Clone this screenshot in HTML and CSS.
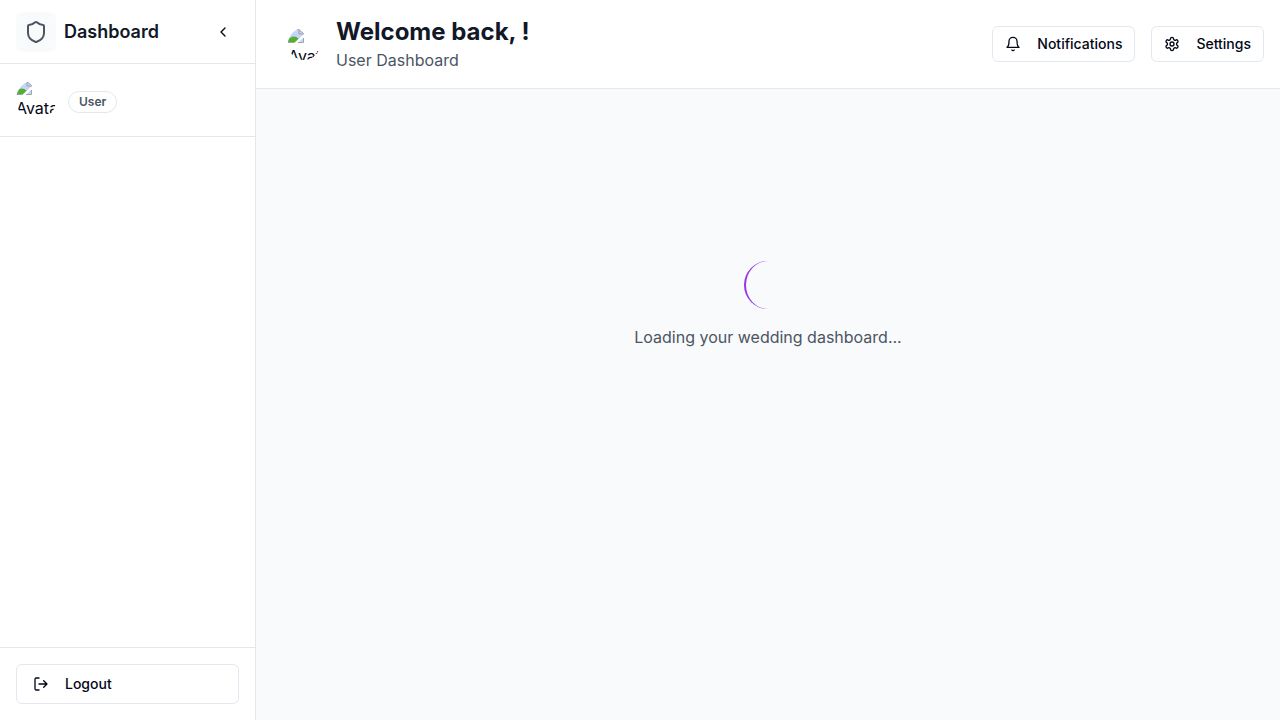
FILE: index.html
```html
<!DOCTYPE html>
<html lang="en">
<head>
  <meta charset="utf-8">
  <meta name="viewport" content="width=device-width, initial-scale=1">
  <title>Dashboard</title>
  <link rel="stylesheet" href="styles.css">
</head>
<body>
  <div class="app">
    <aside class="sidebar">
      <div class="sidebar-header">
        <div class="brand">
          <span class="brand-icon">
            <svg class="icon icon-lg" viewBox="0 0 24 24" aria-hidden="true"><path d="M20 13c0 5-3.500 7.500-7.660 8.950a1 1 0 0 1-.67-.01C7.500 20.500 4 18 4 13V6a1 1 0 0 1 1-1c2 0 4.500-1.200 6.240-2.720a1.170 1.170 0 0 1 1.520 0C14.510 3.810 17 5 19 5a1 1 0 0 1 1 1z"/></svg>
          </span>
          <span class="brand-name">Dashboard</span>
        </div>
        <button class="collapse" type="button" aria-label="Collapse sidebar">
          <svg class="icon" viewBox="0 0 24 24" aria-hidden="true"><path d="m15 18-6-6 6-6"/></svg>
        </button>
      </div>
      <div class="profile">
        <div class="avatar">
          <svg class="missing" viewBox="0 0 16 16" aria-hidden="true">
            <path fill="#c3d5f8" d="M0 1h11l4 4v10H0z"/>
            <path fill="#55ad36" d="M0 14v-2c3-4 7-5 11-1l-4 4H0z"/>
            <path fill="#fff" d="M16 6v3l-7 7H5z"/>
            <path fill="#fff" d="M11 1h5v4h-1z"/>
            <path fill="none" stroke="#a3a3a3" d="M0 14.500h6M10 14.500h5.500V10M6 1.500h5l4.500 4v1M11 2v4h4"/>
          </svg>
          <span class="avatar-text">Avatar</span>
        </div>
        <div class="profile-info">
          <span class="badge">User</span>
        </div>
      </div>
      <nav class="sidebar-nav" aria-label="Main"></nav>
      <div class="sidebar-footer">
        <button class="button button-block" type="button">
          <svg class="icon" viewBox="0 0 24 24" aria-hidden="true"><path d="M9 21H5a2 2 0 0 1-2-2V5a2 2 0 0 1 2-2h4M16 17l5-5-5-5M21 12H9"/></svg>
          Logout
        </button>
      </div>
    </aside>
    <div class="content">
      <header class="topbar">
        <div class="greeting">
          <div class="avatar avatar-sm">
            <svg class="missing" viewBox="0 0 16 16" aria-hidden="true">
              <path fill="#c3d5f8" d="M0 1h11l4 4v10H0z"/>
              <path fill="#55ad36" d="M0 14v-2c3-4 7-5 11-1l-4 4H0z"/>
              <path fill="#fff" d="M16 6v3l-7 7H5z"/>
              <path fill="#fff" d="M11 1h5v4h-1z"/>
              <path fill="none" stroke="#a3a3a3" d="M0 14.500h6M10 14.500h5.500V10M6 1.500h5l4.500 4v1M11 2v4h4"/>
            </svg>
            <span class="avatar-text">Avatar</span>
          </div>
          <div>
            <h1 class="title">Welcome back, !</h1>
            <p class="subtitle">User Dashboard</p>
          </div>
        </div>
        <div class="actions">
          <button class="button" type="button">
            <svg class="icon" viewBox="0 0 24 24" aria-hidden="true"><path d="M6 8a6 6 0 0 1 12 0c0 7 3 9 3 9H3s3-2 3-9M10.300 21a1.940 1.940 0 0 0 3.400 0"/></svg>
            Notifications
          </button>
          <button class="button" type="button">
            <svg class="icon" viewBox="0 0 24 24" aria-hidden="true"><path d="M12.220 2h-.44a2 2 0 0 0-2 2v.18a2 2 0 0 1-1 1.730l-.43.25a2 2 0 0 1-2 0l-.15-.08a2 2 0 0 0-2.730.73l-.22.38a2 2 0 0 0 .73 2.730l.15.1a2 2 0 0 1 1 1.720v.51a2 2 0 0 1-1 1.740l-.15.09a2 2 0 0 0-.73 2.730l.22.38a2 2 0 0 0 2.730.73l.15-.08a2 2 0 0 1 2 0l.43.25a2 2 0 0 1 1 1.730V20a2 2 0 0 0 2 2h.44a2 2 0 0 0 2-2v-.18a2 2 0 0 1 1-1.730l.43-.25a2 2 0 0 1 2 0l.15.08a2 2 0 0 0 2.730-.73l.22-.39a2 2 0 0 0-.73-2.730l-.15-.08a2 2 0 0 1-1-1.740v-.5a2 2 0 0 1 1-1.740l.15-.09a2 2 0 0 0 .73-2.730l-.22-.38a2 2 0 0 0-2.730-.73l-.15.08a2 2 0 0 1-2 0l-.43-.25a2 2 0 0 1-1-1.730V4a2 2 0 0 0-2-2z"/><circle cx="12" cy="12" r="3"/></svg>
            Settings
          </button>
        </div>
      </header>
      <main class="main">
        <div class="loading" role="status">
          <div class="spinner"></div>
          <p class="loading-text">Loading your wedding dashboard...</p>
        </div>
      </main>
    </div>
  </div>
</body>
</html>
```

FILE: styles.css
```css
* {
  box-sizing: border-box;
}

body {
  margin: 0;
  background: #f9fafb;
  color: #020817;
  font-family: Inter, "Liberation Sans", sans-serif;
  font-size: 16px;
  line-height: 24px;
}

h1,
p {
  margin: 0;
}

.app {
  display: flex;
  min-height: 100vh;
}

.sidebar {
  display: flex;
  flex-direction: column;
  flex: none;
  width: 256px;
  background: #fff;
  border-right: 1px solid #e5e7eb;
}

.sidebar-header {
  display: flex;
  align-items: center;
  justify-content: space-between;
  height: 64px;
  padding: 0 16px;
  border-bottom: 1px solid #e5e7eb;
}

.brand {
  display: flex;
  align-items: center;
  gap: 8px;
}

.brand-icon {
  display: flex;
  padding: 8px;
  border-radius: 8px;
  background: #f9fafb;
  color: #4b5563;
}

.brand-name {
  color: #111827;
  font-size: 18px;
  font-weight: 600;
  line-height: 28px;
}

.icon {
  flex: none;
  width: 16px;
  height: 16px;
  fill: none;
  stroke: currentColor;
  stroke-width: 2;
  stroke-linecap: round;
  stroke-linejoin: round;
}

.icon-lg {
  width: 24px;
  height: 24px;
}

.collapse {
  display: flex;
  padding: 8px;
  border: 0;
  border-radius: 6px;
  background: transparent;
  color: inherit;
  cursor: pointer;
}

.profile {
  display: flex;
  align-items: center;
  gap: 12px;
  padding: 16px;
  border-bottom: 1px solid #e5e7eb;
}

.profile-info {
  display: flex;
  padding-top: 4px;
}

.avatar {
  flex: none;
  width: 40px;
  height: 40px;
  overflow: hidden;
  border-radius: 50%;
}

.avatar-sm {
  width: 32px;
  height: 32px;
}

.missing {
  display: block;
  width: 16px;
  height: 16px;
}

.avatar-text {
  display: block;
  white-space: nowrap;
}

.badge {
  padding: 2px 10px;
  border: 1px solid #e5e7eb;
  border-radius: 12px;
  color: #4b5563;
  font-size: 12px;
  font-weight: 600;
  line-height: 16px;
}

.sidebar-nav {
  flex: 1;
}

.sidebar-footer {
  padding: 16px;
  border-top: 1px solid #e5e7eb;
}

.button {
  display: flex;
  align-items: center;
  gap: 16px;
  height: 36px;
  padding: 0 12px;
  border: 1px solid #e2e8f0;
  border-radius: 6px;
  background: #fff;
  color: #020817;
  font-family: inherit;
  font-size: 14px;
  font-weight: 500;
  line-height: 20px;
  cursor: pointer;
}

.button-block {
  width: 100%;
  height: 40px;
  padding: 0 16px;
}

.content {
  display: flex;
  flex-direction: column;
  flex: 1;
  min-width: 0;
}

.topbar {
  display: flex;
  align-items: center;
  justify-content: space-between;
  padding: 16px 16px 16px 32px;
  border-bottom: 1px solid #e5e7eb;
  background: #fff;
}

.greeting,
.actions {
  display: flex;
  align-items: center;
  gap: 16px;
}

.title {
  color: #111827;
  font-size: 24px;
  font-weight: 700;
  line-height: 32px;
}

.subtitle,
.loading-text {
  color: #4b5563;
}

.main {
  flex: 1;
  padding: 24px;
}

.loading {
  display: flex;
  flex-direction: column;
  align-items: center;
  justify-content: center;
  gap: 16px;
  min-height: 384px;
}

.spinner {
  width: 48px;
  height: 48px;
  border: 0 solid #9333ea;
  border-left-width: 2px;
  border-radius: 50%;
}
```
